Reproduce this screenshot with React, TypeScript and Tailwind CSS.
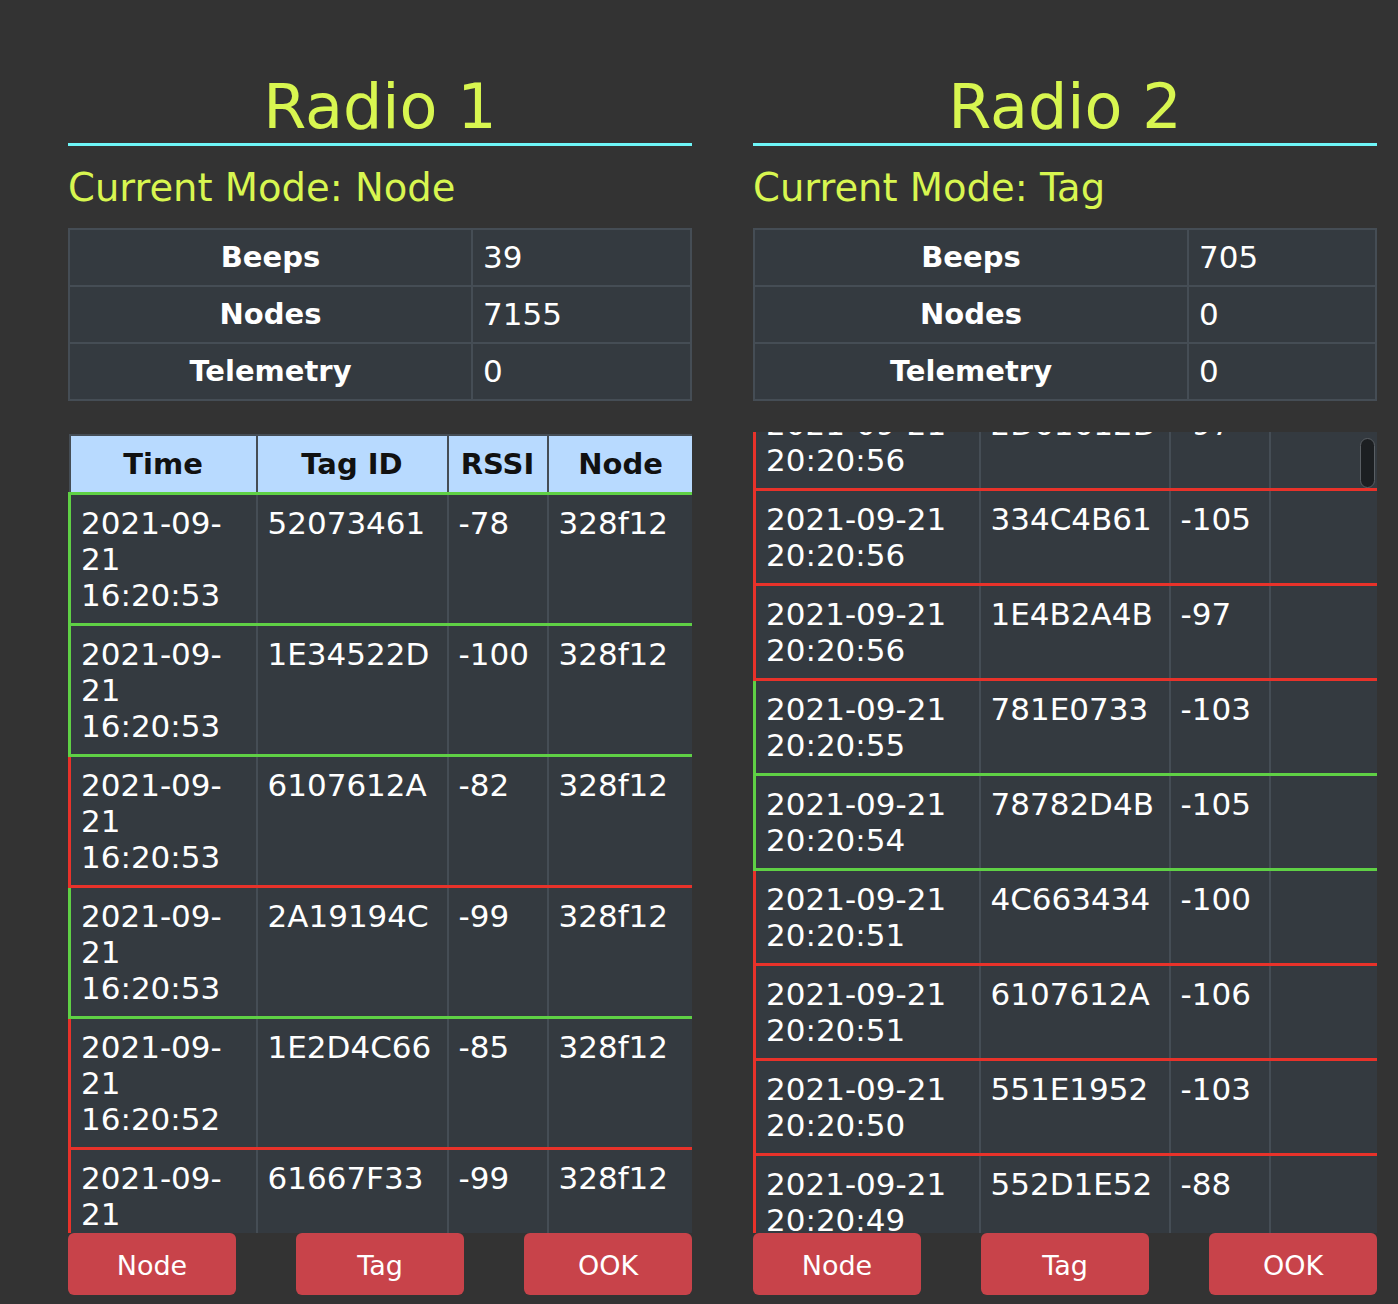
import { useEffect, useRef } from "react";

type Beep = { time: string; tag: string; rssi: string; node: string; ok: boolean };

const radio1: Beep[] = [
  { time: "2021-09-21 16:20:53", tag: "52073461", rssi: "-78", node: "328f12", ok: true },
  { time: "2021-09-21 16:20:53", tag: "1E34522D", rssi: "-100", node: "328f12", ok: true },
  { time: "2021-09-21 16:20:53", tag: "6107612A", rssi: "-82", node: "328f12", ok: false },
  { time: "2021-09-21 16:20:53", tag: "2A19194C", rssi: "-99", node: "328f12", ok: true },
  { time: "2021-09-21 16:20:52", tag: "1E2D4C66", rssi: "-85", node: "328f12", ok: false },
  { time: "2021-09-21 16:20:52", tag: "61667F33", rssi: "-99", node: "328f12", ok: false },
  { time: "2021-09-21 16:20:51", tag: "552D1E52", rssi: "-91", node: "328f12", ok: false },
];

const radio2: Beep[] = [
  { time: "2021-09-21 20:20:57", tag: "61667F33", rssi: "-96", node: "", ok: false },
  { time: "2021-09-21 20:20:57", tag: "52073461", rssi: "-101", node: "", ok: true },
  { time: "2021-09-21 20:20:56", tag: "2D61612D", rssi: "-97", node: "", ok: false },
  { time: "2021-09-21 20:20:56", tag: "334C4B61", rssi: "-105", node: "", ok: false },
  { time: "2021-09-21 20:20:56", tag: "1E4B2A4B", rssi: "-97", node: "", ok: false },
  { time: "2021-09-21 20:20:55", tag: "781E0733", rssi: "-103", node: "", ok: true },
  { time: "2021-09-21 20:20:54", tag: "78782D4B", rssi: "-105", node: "", ok: true },
  { time: "2021-09-21 20:20:51", tag: "4C663434", rssi: "-100", node: "", ok: false },
  { time: "2021-09-21 20:20:51", tag: "6107612A", rssi: "-106", node: "", ok: false },
  { time: "2021-09-21 20:20:50", tag: "551E1952", rssi: "-103", node: "", ok: false },
  { time: "2021-09-21 20:20:49", tag: "552D1E52", rssi: "-88", node: "", ok: false },
  { time: "2021-09-21 20:20:48", tag: "1E34522D", rssi: "-94", node: "", ok: false },
];

function Stats({
  beeps,
  nodes,
  telemetry,
  labelWidth,
}: {
  beeps: number;
  nodes: number;
  telemetry: number;
  labelWidth: number;
}) {
  const rows: [string, number][] = [
    ["Beeps", beeps],
    ["Nodes", nodes],
    ["Telemetry", telemetry],
  ];
  return (
    <table className="w-full table-fixed border-collapse bg-[#343a40] text-white">
      <colgroup>
        <col style={{ width: labelWidth }} />
        <col />
      </colgroup>
      <tbody>
        {rows.map(([label, value]) => (
          <tr key={label}>
            <th className="border-2 border-[#454d55] py-[9px] text-center text-[29px] font-bold leading-[37px]">
              {label}
            </th>
            <td className="border-2 border-[#454d55] px-[10px] py-[9px] text-left text-[31px] leading-[37px]">
              {value}
            </td>
          </tr>
        ))}
      </tbody>
    </table>
  );
}

function BeepLog({ rows, cols, scrolled }: { rows: Beep[]; cols: number[]; scrolled?: boolean }) {
  const box = useRef<HTMLDivElement>(null);
  const anchor = useRef<HTMLTableRowElement>(null);

  useEffect(() => {
    // tag-mode log sits scrolled down, like the live page
    if (!scrolled || !box.current || !anchor.current) return;
    const b = box.current.getBoundingClientRect();
    const r = anchor.current.getBoundingClientRect();
    box.current.scrollTop = r.bottom - b.top - 58;
  }, [scrolled]);

  return (
    <div className="relative">
      <div ref={box} className="h-[801px] overflow-y-auto pt-[2px] [scrollbar-width:none]">
        <table className="w-full table-fixed border-collapse text-white">
          <colgroup>
            {cols.map((w, i) => (
              <col key={i} style={{ width: w }} />
            ))}
          </colgroup>
          <thead>
            <tr className="bg-[#b8daff] text-[#111]">
              {["Time", "Tag ID", "RSSI", "Node"].map((h) => (
                <th
                  key={h}
                  className="border-2 border-[#454d55] py-[10px] text-center text-[29px] font-bold leading-[36px]"
                >
                  {h}
                </th>
              ))}
            </tr>
          </thead>
          <tbody>
            {rows.map((r, i) => (
              <tr
                key={i}
                ref={scrolled && i === 2 ? anchor : undefined}
                className={
                  r.ok
                    ? "border-[3px] border-[#5fd045] bg-[#343a40]"
                    : "border-[3px] border-[#e8322a] bg-[#343a40]"
                }
              >
                {[r.time, r.tag, r.rssi, r.node].map((c, j) => (
                  <td
                    key={j}
                    className="border-2 border-[#454d55] px-[10px] py-[10px] align-top text-[31px] leading-[36px]"
                  >
                    {c}
                  </td>
                ))}
              </tr>
            ))}
          </tbody>
        </table>
      </div>
      {scrolled && (
        <div className="absolute right-[2px] top-[6px] h-[50px] w-[15px] rounded-full border border-[#5a5f64] bg-[#1c1f22]" />
      )}
    </div>
  );
}

function Radio({
  n,
  mode,
  beeps,
  nodes,
  telemetry,
  labelWidth,
  rows,
  cols,
  scrolled,
}: {
  n: number;
  mode: string;
  beeps: number;
  nodes: number;
  telemetry: number;
  labelWidth: number;
  rows: Beep[];
  cols: number[];
  scrolled?: boolean;
}) {
  return (
    <div className="flex w-[624px] flex-col">
      <h1 className="border-b-[3px] border-[#6ef6f8] text-center text-[62px] leading-[72px] text-[#d8f650]">
        Radio {n}
      </h1>
      <h2 className="mt-[19px] text-[38.5px] leading-[46px] text-[#d8f650]">Current Mode: {mode}</h2>
      <div className="mt-[17px]">
        <Stats beeps={beeps} nodes={nodes} telemetry={telemetry} labelWidth={labelWidth} />
      </div>
      <div className="mt-[31px]">
        <BeepLog rows={rows} cols={cols} scrolled={scrolled} />
      </div>
      <div className="flex justify-between">
        {["Node", "Tag", "OOK"].map((b) => (
          <button
            key={b}
            className="h-[62px] w-[168px] rounded-md bg-[#c8434a] pt-[4px] text-[27px] text-white"
          >
            {b}
          </button>
        ))}
      </div>
    </div>
  );
}

export default function App() {
  return (
    <div className="min-h-[1304px] bg-[#333333] pl-[68px] pt-[71px] font-['DejaVu_Sans',sans-serif]">
      <div className="flex gap-[61px]">
        <Radio
          n={1}
          mode="Node"
          beeps={39}
          nodes={7155}
          telemetry={0}
          labelWidth={403}
          rows={radio1}
          cols={[187, 191, 100, 146]}
        />
        <Radio
          n={2}
          mode="Tag"
          beeps={705}
          nodes={0}
          telemetry={0}
          labelWidth={434}
          rows={radio2}
          cols={[225, 190, 100, 109]}
          scrolled
        />
      </div>
    </div>
  );
}
